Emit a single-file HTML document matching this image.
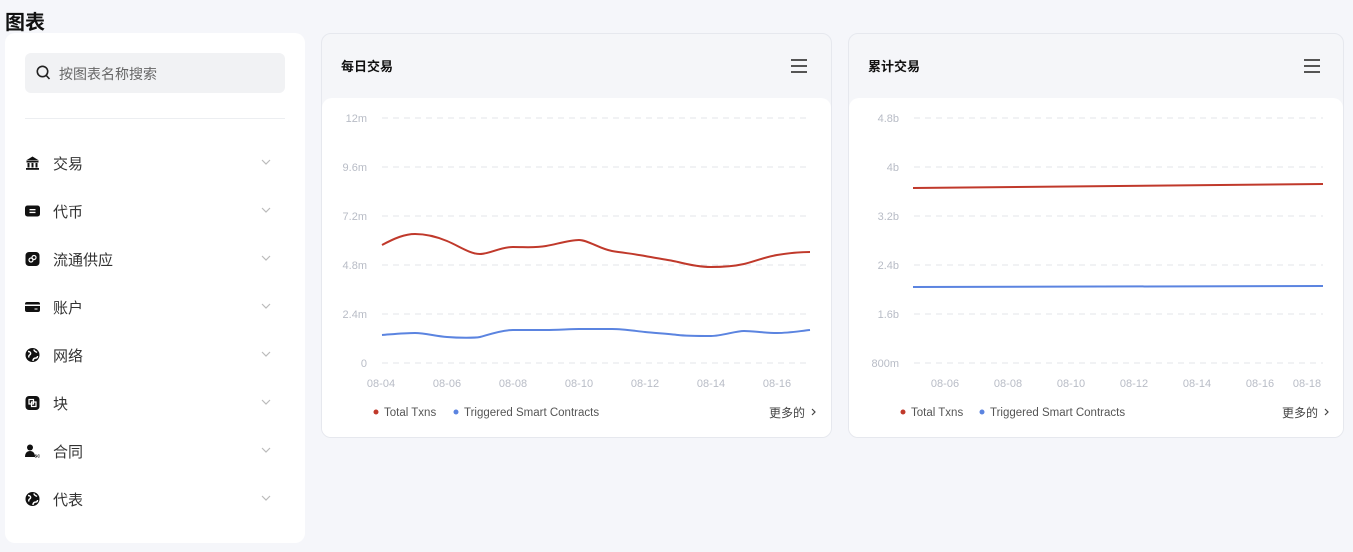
<!DOCTYPE html>
<html><head><meta charset="utf-8"><style>
*{margin:0;padding:0;box-sizing:border-box}
body{width:1353px;height:552px;background:#f5f6fa;font-family:"Liberation Sans","Noto Sans CJK SC",sans-serif;position:relative;overflow:hidden;color:#222}
.title{position:absolute;left:5px;top:6px;font-size:20px;font-weight:bold;color:#111}
.side{position:absolute;left:5px;top:33px;width:300px;height:510px;background:#fff;border-radius:10px}
.search{position:absolute;left:20px;top:20px;width:260px;height:40px;background:#f1f2f4;border-radius:6px}
.search span{position:absolute;left:34px;top:11px;font-size:14px;color:#666}
.divider{position:absolute;left:20px;top:85px;width:260px;height:1px;background:#eceef1}
.item{position:absolute;left:20px;width:260px;height:24px}
.item .ic{position:absolute;left:0;top:5px;width:15px;height:14px}
.item .t{position:absolute;left:28px;top:2px;font-size:15px;color:#333}
.item .ch{position:absolute;left:236px;top:7px}
.card{position:absolute;top:33px;height:405px;background:#f5f6f9;border:1px solid #e6e8ee;border-radius:10px;overflow:hidden}
.card .hd{position:absolute;left:19px;top:22px;font-size:13px;font-weight:bold;color:#111}
.card .body{position:absolute;left:0;right:0;top:64px;bottom:0;background:#fff;border-radius:10px 10px 0 0}
.menu{position:absolute;top:25px;width:16px;height:14px}
.menu i{display:block;height:2px;background:#555;margin-bottom:4px}
svg text{font-family:"Liberation Sans",sans-serif}
</style></head><body>
<div class="title">图表</div>
<div class="side">
 <div class="search">
  <svg style="position:absolute;left:11px;top:12px" width="15" height="16" viewBox="0 0 15 16"><circle cx="6.5" cy="6.5" r="5.2" fill="none" stroke="#222" stroke-width="1.6"/><line x1="10.3" y1="10.5" x2="13.5" y2="14" stroke="#222" stroke-width="1.6"/></svg>
  <span>按图表名称搜索</span>
 </div>
 <div class="divider"></div>
 <div class="item" style="top:118px"><svg class="ic" viewBox="0 0 15 14"><path d="M7.5 0.5L1 4.5H14Z" fill="#111"/><rect x="1.5" y="5" width="12" height="1.5" fill="#111"/><rect x="2.5" y="7" width="2" height="4.5" fill="#111"/><rect x="6.5" y="7" width="2" height="4.5" fill="#111"/><rect x="10.5" y="7" width="2" height="4.5" fill="#111"/><rect x="1" y="12" width="13" height="1.8" fill="#111"/></svg><span class="t">交易</span><svg class="ch" width="10" height="8"><path d="M1 2l4 4 4-4" fill="none" stroke="#bbb" stroke-width="1.2"/></svg></div>
 <div class="item" style="top:166px"><svg class="ic" viewBox="0 0 15 14"><rect x="0" y="1.5" width="15" height="11" rx="2.5" fill="#111"/><rect x="4.5" y="5" width="6" height="1.3" fill="#fff"/><rect x="4.5" y="7.8" width="6" height="1.3" fill="#fff"/></svg><span class="t">代币</span><svg class="ch" width="10" height="8"><path d="M1 2l4 4 4-4" fill="none" stroke="#bbb" stroke-width="1.2"/></svg></div>
 <div class="item" style="top:214px"><svg class="ic" viewBox="0 0 15 14"><rect x="0.5" y="0" width="14" height="14" rx="3.5" fill="#111"/><circle cx="6" cy="8" r="2" fill="none" stroke="#fff" stroke-width="1.2"/><circle cx="9" cy="5.5" r="2" fill="none" stroke="#fff" stroke-width="1.2"/></svg><span class="t">流通供应</span><svg class="ch" width="10" height="8"><path d="M1 2l4 4 4-4" fill="none" stroke="#bbb" stroke-width="1.2"/></svg></div>
 <div class="item" style="top:262px"><svg class="ic" viewBox="0 0 15 14"><rect x="0" y="2" width="15" height="10" rx="2" fill="#111"/><rect x="0" y="4.5" width="15" height="1.5" fill="#fff"/><rect x="9.5" y="8.5" width="3" height="1" fill="#fff"/></svg><span class="t">账户</span><svg class="ch" width="10" height="8"><path d="M1 2l4 4 4-4" fill="none" stroke="#bbb" stroke-width="1.2"/></svg></div>
 <div class="item" style="top:310px"><svg class="ic" viewBox="0 0 15 14"><circle cx="7.5" cy="7" r="7" fill="#111"/><path d="M3 3.5c2 0 3 1 2.5 2.5S3 7 4 9.5M9 1.5c0 2 2 2 3 3M8 13c0-2 1-3 3-3 1 0 1.5-1 1.5-2" stroke="#fff" stroke-width="1.4" fill="none"/></svg><span class="t">网络</span><svg class="ch" width="10" height="8"><path d="M1 2l4 4 4-4" fill="none" stroke="#bbb" stroke-width="1.2"/></svg></div>
 <div class="item" style="top:358px"><svg class="ic" viewBox="0 0 15 14"><rect x="0.5" y="0" width="14" height="14" rx="3.5" fill="#111"/><rect x="4" y="3.5" width="4.5" height="4.5" fill="none" stroke="#fff" stroke-width="1.2"/><rect x="6.5" y="6" width="4.5" height="4.5" fill="none" stroke="#fff" stroke-width="1.2"/></svg><span class="t">块</span><svg class="ch" width="10" height="8"><path d="M1 2l4 4 4-4" fill="none" stroke="#bbb" stroke-width="1.2"/></svg></div>
 <div class="item" style="top:406px"><svg class="ic" viewBox="0 0 15 14"><circle cx="5" cy="3.5" r="3" fill="#111"/><path d="M0 13c0-4 2-6 5-6s5 2 5 6Z" fill="#111"/><text x="9.5" y="13.5" font-size="5" font-weight="bold" fill="#111">sc</text></svg><span class="t">合同</span><svg class="ch" width="10" height="8"><path d="M1 2l4 4 4-4" fill="none" stroke="#bbb" stroke-width="1.2"/></svg></div>
 <div class="item" style="top:454px"><svg class="ic" viewBox="0 0 15 14"><circle cx="7.5" cy="7" r="7" fill="#111"/><path d="M3 3.5c2 0 3 1 2.5 2.5S3 7 4 9.5M9 1.5c0 2 2 2 3 3M8 13c0-2 1-3 3-3 1 0 1.5-1 1.5-2" stroke="#fff" stroke-width="1.4" fill="none"/></svg><span class="t">代表</span><svg class="ch" width="10" height="8"><path d="M1 2l4 4 4-4" fill="none" stroke="#bbb" stroke-width="1.2"/></svg></div>
</div>

<div class="card" style="left:321px;width:511px">
 <div class="hd">每日交易</div>
 <div class="menu" style="left:469px"><i></i><i></i><i></i></div>
 <div class="body"></div>
</div>
<div class="card" style="left:848px;width:496px">
 <div class="hd">累计交易</div>
 <div class="menu" style="left:455px"><i></i><i></i><i></i></div>
 <div class="body"></div>
</div>

<svg style="position:absolute;left:0;top:0" width="1353" height="552">
 <g stroke="#e3e5ea" stroke-dasharray="6,5" stroke-width="1">
  <line x1="382" y1="118" x2="808" y2="118"/><line x1="382" y1="167" x2="808" y2="167"/><line x1="382" y1="216" x2="808" y2="216"/><line x1="382" y1="265" x2="808" y2="265"/><line x1="382" y1="314" x2="808" y2="314"/><line x1="382" y1="363" x2="808" y2="363"/>
  <line x1="914" y1="118" x2="1323" y2="118"/><line x1="914" y1="167" x2="1323" y2="167"/><line x1="914" y1="216" x2="1323" y2="216"/><line x1="914" y1="265" x2="1323" y2="265"/><line x1="914" y1="314" x2="1323" y2="314"/><line x1="914" y1="363" x2="1323" y2="363"/>
 </g>
 <g font-size="11" fill="#b8bcc6" text-anchor="end">
  <text x="367" y="122">12m</text><text x="367" y="171">9.6m</text><text x="367" y="220">7.2m</text><text x="367" y="269">4.8m</text><text x="367" y="318">2.4m</text><text x="367" y="367">0</text>
  <text x="899" y="122">4.8b</text><text x="899" y="171">4b</text><text x="899" y="220">3.2b</text><text x="899" y="269">2.4b</text><text x="899" y="318">1.6b</text><text x="899" y="367">800m</text>
 </g>
 <g font-size="11" fill="#b8bcc6" text-anchor="middle">
  <text x="381" y="387">08-04</text><text x="447" y="387">08-06</text><text x="513" y="387">08-08</text><text x="579" y="387">08-10</text><text x="645" y="387">08-12</text><text x="711" y="387">08-14</text><text x="777" y="387">08-16</text>
  <text x="945" y="387">08-06</text><text x="1008" y="387">08-08</text><text x="1071" y="387">08-10</text><text x="1134" y="387">08-12</text><text x="1197" y="387">08-14</text><text x="1260" y="387">08-16</text><text x="1307" y="387">08-18</text>
 </g>
 <path d="M382 245C395 238 405 234 415 234S435 236 447 241S470 254 480 254S500 247 513 247S535 248 546 246S570 240 579 240S600 249 612 251S635 254 645 256S670 260 678 262S700 267 711 267S735 266 744 264S765 257 777 255S800 252 810 252" fill="none" stroke="#c0392b" stroke-width="2"/>
 <path d="M382 335C395 334 405 333 415 333S435 336 447 337S475 338 480 337S500 330 513 330S535 330 546 330S570 329 579 329S600 329 612 329S635 331 645 332S670 334 678 335S700 336 711 336S735 331 744 331S765 333 777 333S800 331 810 330" fill="none" stroke="#5b84e0" stroke-width="2"/>
 <path d="M913 188L1323 184" stroke="#c0392b" stroke-width="2"/>
 <path d="M913 287L1323 286" stroke="#5b84e0" stroke-width="2"/>
 <g font-size="11.5" fill="#555">
  <circle cx="376" cy="412" r="2.5" fill="#c0392b"/><text x="384" y="416">Total Txns</text>
  <circle cx="456" cy="412" r="2.5" fill="#5b84e0"/><text x="464" y="416">Triggered Smart Contracts</text>
  <circle cx="903" cy="412" r="2.5" fill="#c0392b"/><text x="911" y="416">Total Txns</text>
  <circle cx="982" cy="412" r="2.5" fill="#5b84e0"/><text x="990" y="416">Triggered Smart Contracts</text>
 </g>
 <g font-size="12" fill="#444">
  <text x="769" y="417" style="font-family:'Liberation Sans','Noto Sans CJK SC',sans-serif">更多的</text>
  <text x="1282" y="417" style="font-family:'Liberation Sans','Noto Sans CJK SC',sans-serif">更多的</text>
 </g>
 <path d="M812 409l3 3-3 3M1325 409l3 3-3 3" fill="none" stroke="#444" stroke-width="1.2"/>
</svg>
</body></html>
